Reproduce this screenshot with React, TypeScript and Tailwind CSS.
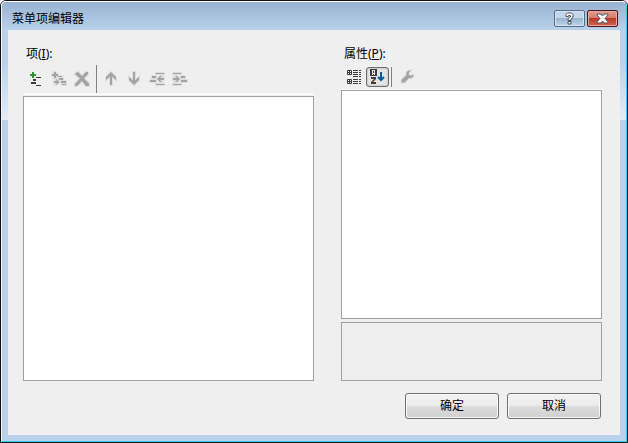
import { ReactNode } from 'react'
import clsx from 'clsx'

type ToolButtonProps = {
  label: string
  disabled?: boolean
  pressed?: boolean
  children: ReactNode
}

function ToolButton({ label, disabled, pressed, children }: ToolButtonProps) {
  return (
    <button
      type="button"
      aria-label={label}
      title={label}
      disabled={disabled}
      aria-pressed={pressed}
      className={clsx(
        'flex h-5 w-[23px] shrink-0 items-center rounded-[3px] border pl-[2px]',
        pressed ? 'border-[#6e6e6e] bg-[#e4e4e4] shadow-[inset_0_0_2px_#999999]' : 'border-transparent'
      )}
    >
      <svg width="16" height="16" viewBox="0 0 16 16" fill="none" className="shrink-0">
        {children}
      </svg>
    </button>
  )
}

// disabled glyph: grey shape with a lighter rim
function GreyShape({ d }: { d: string }) {
  return (
    <>
      <path d={d} fill="#dedede" stroke="#dedede" strokeWidth="2" />
      <path d={d} fill="#a3a3a3" />
    </>
  )
}

const upArrow = 'M8 1l5 5v3L9 5.500V14H7V5.500L3 9V6z'
const downArrow = 'M8 14l5-5V6L9 9.500V1H7v8.500L3 6v3z'
const outdent = 'M7 2h8v1H7zM3 5h4v2H3zM1 9h6v2H1zM7 13h8v1H7zM8 8l3-3h2l-2 2h4v2h-4l2 2h-2z'
const indent = 'M1 2h8v1H1zM9 5h4v2H9zM9 9h6v2H9zM1 13h8v1H1zM8 8L5 5H3l2 2H1v2h4l-2 2h2z'
const addChild = 'M3 1h2v2h2v2H5v2H3V5H1V3h2zM7 5h4v1H7zM8 7h4v2H8zM10 10h5v2h-5zM11 13h4v1h-4zM3 10h3L4.500 8.500H6L8.500 11 6 13.500H4.500L6 12H3z'
const cross = 'M1 3l2-2h1l4 4 4-4h2v2L10 7.500l5 5V15h-3L8 10l-5 5H1v-2l5-5.500z'
const wrench = 'M14 5.500L11.500 7 9.500 5.500 10 3l2-1.500C8.500 1 7 3.500 7.500 6L2.500 11v2.500h3L10 9C13 9.500 15 8 14 5.500z'

function Separator({ className }: { className: string }) {
  return <div role="separator" className={clsx('w-px shrink-0 bg-[#808080]', className)} />
}

function DialogButton({ children }: { children: ReactNode }) {
  return (
    <button
      type="button"
      className="h-[26px] w-[94px] rounded-[3px] border border-[#707070] bg-[linear-gradient(#f2f2f2,#ebebeb_50%,#dddddd_50%,#cfcfcf)] text-center shadow-[inset_0_0_0_1px_#f8f8f8]"
    >
      {children}
    </button>
  )
}

export default function App() {
  return (
    <div className="flex min-h-screen flex-col rounded-t-[6px] border border-[#101418] bg-white font-['Noto_Sans','Noto_Sans_CJK_SC',sans-serif] text-xs leading-4 text-black">
      <div className="flex grow flex-col rounded-t-[5px] border border-t-white border-r-[#2fd0ea] border-b-[#2fd0ea] border-l-[#eef5fb] bg-[linear-gradient(#98b3d2_0px,#b9d1ea_28px,#b9d1ea_60px,#e3edf7_118px,#b9d1ea_118px)] px-[6px] pb-[6px]">
        {/* Title bar */}
        <header className="flex h-7 items-start justify-between pt-2">
          <h1 className="ml-1 leading-[18px]">菜单项编辑器</h1>
          <div className="mr-[2px] flex gap-[2px]">
            <button
              type="button"
              aria-label="帮助"
              className="flex h-[17px] w-[31px] items-center justify-center rounded-[2px] border border-[#566c87] bg-[linear-gradient(#c5d6e9_50%,#9bb5d1_50%,#bdd3ea)] shadow-[inset_0_0_0_1px_#d5e3f2]"
            >
              <svg width="9" height="13" viewBox="0 0 9 13" fill="none">
                <path d="M1 4.500h2.500V3.500h2v1.500L3 6.500V8.500h3V7l2-1.500V2.500L6.500 1h-4L1 2.500zM3 9.500h3V12H3z" fill="#ffffff" stroke="#4c5668" />
              </svg>
            </button>
            <button
              type="button"
              aria-label="关闭"
              className="flex h-[17px] w-[31px] items-center justify-center rounded-[2px] border border-[#4b1419] bg-[linear-gradient(#e3a093,#d3796a_50%,#bb3a28_50%,#cf6450)] shadow-[inset_0_0_0_1px_#e8aaa0]"
            >
              <svg width="13" height="11" viewBox="0 0 13 11">
                <path d="M1 1h4l1.500 2L8 1h4v1L9 5.500 12 9v1H8L6.500 8 5 10H1V9l3-3.500L1 2z" fill="#ffffff" stroke="#53555f" />
              </svg>
            </button>
          </div>
        </header>

        <main className="flex grow flex-col gap-3 bg-[#efefef] pt-4 pr-[18px] pb-4 pl-[15px]">
          <div className="grid grow grid-cols-[291fr_261fr] gap-[27px]">
            {/* Items */}
            <section className="flex flex-col">
              <label htmlFor="items" className="mb-[3px] pl-[3px]">
                项(<u>I</u>):
              </label>
              <div role="toolbar" className="mb-px flex h-[30px] items-center border-b-2 border-[#f9f9f9] pl-[2px]">
                <ToolButton label="添加">
                  <path d="M4 1h2v2h2v2H6v2H4V5H2V3h2z" fill="#2f9431" />
                  <path d="M8 6h5v1H8zM5 8h3v2H5zM3 11h5v2H3zM8 14h5v1H8z" fill="#3c3c3c" />
                </ToolButton>
                <ToolButton label="添加子项" disabled>
                  <GreyShape d={addChild} />
                </ToolButton>
                <ToolButton label="删除" disabled>
                  <GreyShape d={cross} />
                </ToolButton>
                <Separator className="mr-[3px] ml-[2px] self-stretch" />
                <ToolButton label="上移" disabled>
                  <GreyShape d={upArrow} />
                </ToolButton>
                <ToolButton label="下移" disabled>
                  <GreyShape d={downArrow} />
                </ToolButton>
                <ToolButton label="减少缩进" disabled>
                  <GreyShape d={outdent} />
                </ToolButton>
                <ToolButton label="增加缩进" disabled>
                  <GreyShape d={indent} />
                </ToolButton>
              </div>
              <select id="items" size={8} className="w-full grow appearance-none border border-[#a0a0a0] bg-white outline-none" />
            </section>

            {/* Properties */}
            <section className="flex flex-col" aria-labelledby="properties">
              <h2 id="properties" className="mb-[3px] pl-[3px]">
                属性(<u>P</u>):
              </h2>
              <div role="toolbar" className="flex h-[25px] items-center border-b border-[#f9f9f9] pl-[2px]">
                <ToolButton label="按分类排序">
                  <path d="M1.500 1.500h4v4h-4zM1.500 10.500h4v4h-4z" stroke="#3c3c3c" />
                  <path d="M3 2h1v3H3zM2 3h3v1H2zM3 11h1v3H3zM2 12h3v1H2z" fill="#3c3c3c" />
                  <path d="M7 1.500h5M7 3.500h5M7 5.500h5M7 7.500h5M7 10.500h5M7 12.500h5M7 14.500h5" stroke="#3c3c3c" />
                  <path d="M13 1.500h2M13 3.500h2M13 5.500h2M13 7.500h2M13 10.500h2M13 12.500h2M13 14.500h2" stroke="#3c3c3c" />
                </ToolButton>
                <ToolButton label="按字母排序" pressed>
                  <path d="M1 0h7v7H1z" fill="#3c3c3c" />
                  <path d="M3.500 6V2M5.500 6V2M3 1.500h3M3 4.500h3" stroke="#e4e4e4" />
                  <path d="M2 8h5v2l-3 3h3v2H2v-2l3-3H2z" fill="#3c3c3c" />
                  <path d="M12 3v8M9 8l3 3 3-3" stroke="#0b5a9a" strokeWidth="2" />
                </ToolButton>
                <Separator className="mr-1 ml-[2px] h-5" />
                <ToolButton label="属性页" disabled>
                  <GreyShape d={wrench} />
                </ToolButton>
              </div>
              <div className="grow border border-[#a0a0a0] bg-white" />
              <div className="mt-[3px] h-[59px] border border-[#a0a0a0]" />
            </section>
          </div>

          <footer className="flex justify-end gap-2 pr-px">
            <DialogButton>确定</DialogButton>
            <DialogButton>取消</DialogButton>
          </footer>
        </main>
      </div>
    </div>
  )
}
